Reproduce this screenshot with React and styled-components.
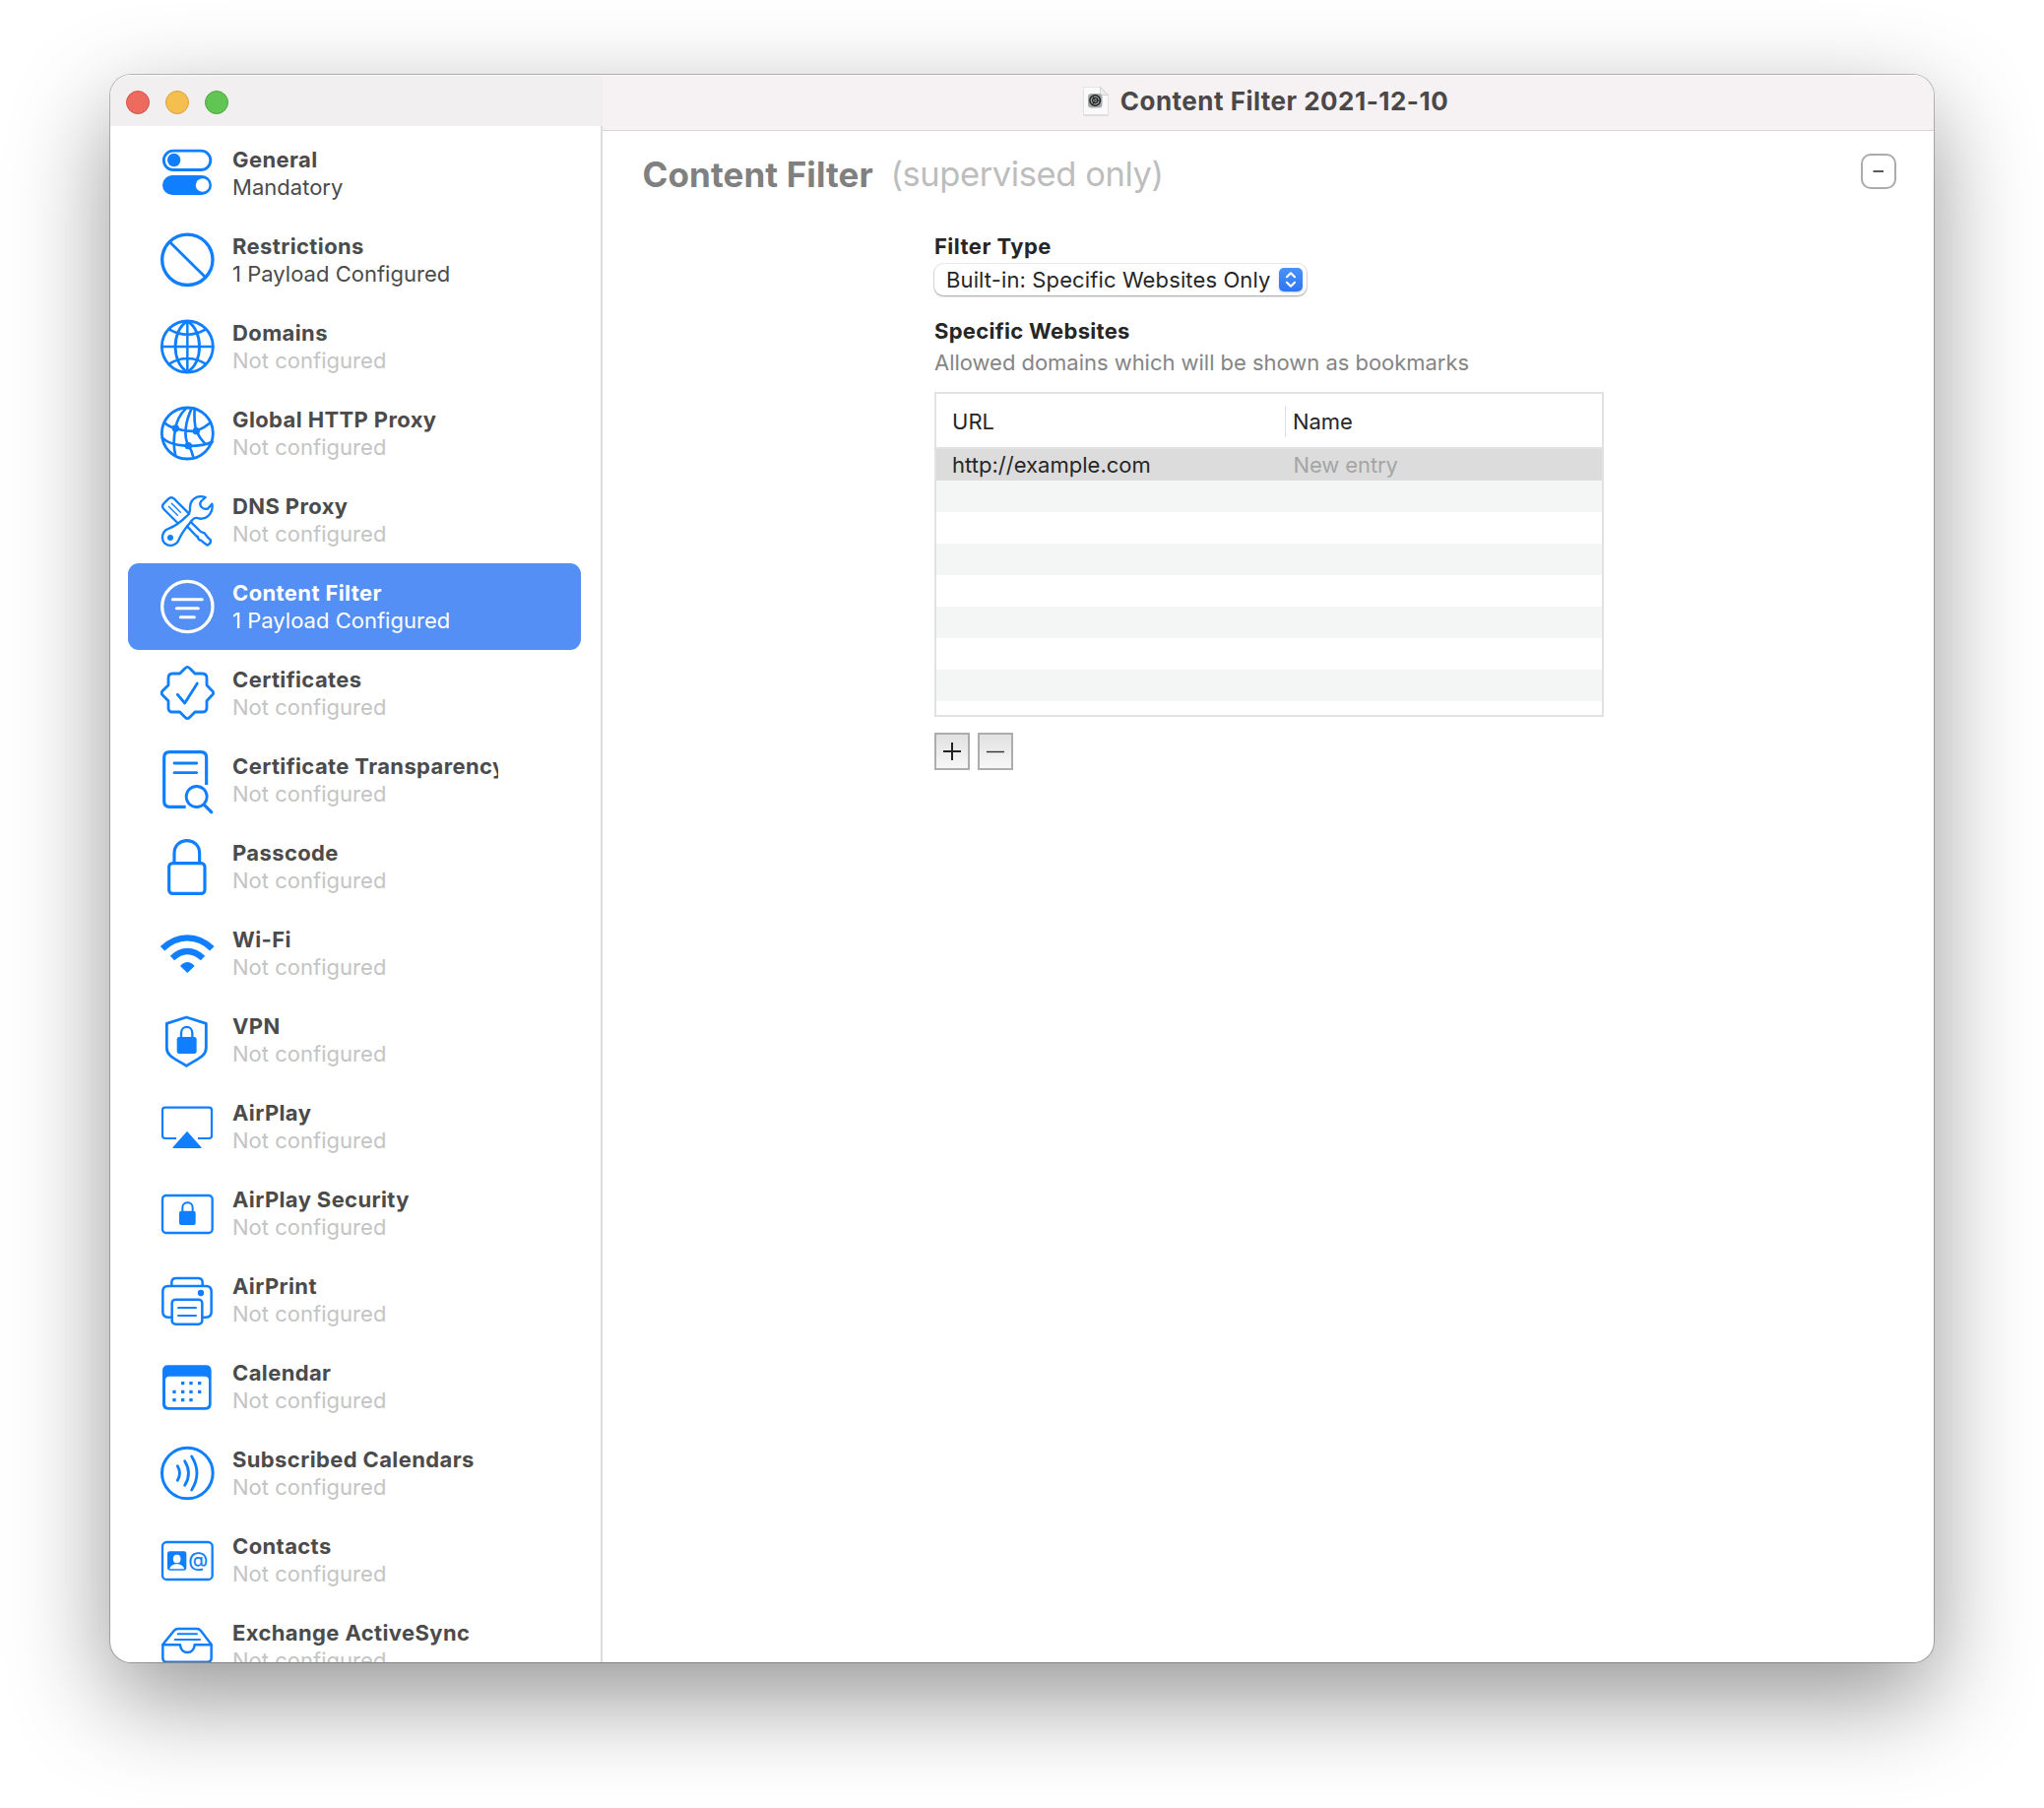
import React, { useState } from "react";
import styled, { createGlobalStyle } from "styled-components";

const BLUE = "#0f7fff";

const GlobalStyle = createGlobalStyle`
  body {
    margin: 0;
    background: #fff;
    font-family: Inter, "Liberation Sans", sans-serif;
    font-size: 22px;
    line-height: 28px;
    overflow: hidden;
  }
  * {
    box-sizing: border-box;
  }
`;

const Desktop = styled.div`
  width: 2076px;
  height: 1836px;
  padding: 76px 112px 148px;
  overflow: hidden;
`;

const Window = styled.div`
  display: flex;
  width: 1852px;
  height: 1612px;
  border-radius: 21px;
  overflow: hidden;
  background: #fff;
  box-shadow: 0 0 0 1px rgba(0, 0, 0, 0.24), 0 36px 100px rgba(0, 0, 0, 0.42);
`;

const Sidebar = styled.aside`
  display: flex;
  flex-direction: column;
  width: 500px;
  flex: none;
`;

const WindowControls = styled.div`
  display: flex;
  align-items: center;
  gap: 16px;
  height: 52px;
  flex: none;
  padding: 4px 0 0 16px;
  background: #f1eff0;
  box-shadow: inset 0 1px 0 #fafafa;
`;

const Light = styled.span`
  width: 24px;
  height: 24px;
  border-radius: 50%;
  background: ${(props) => props.color};
  border: 1px solid ${(props) => props.edge};
`;

const PayloadList = styled.ul`
  flex: 1;
  min-height: 0;
  margin: 0;
  padding: 4px 20px 0 18px;
  list-style: none;
  overflow: hidden;
  border-right: 2px solid #dcdcdc;
`;

const Payload = styled.li`
  display: flex;
  height: 88px;
  padding-left: 30px;
  border-radius: 11px;
  color: ${(props) => (props.selected ? "#fff" : BLUE)};
  background: ${(props) => (props.selected ? "#548ff5" : "transparent")};
`;

const PayloadIcon = styled.svg`
  width: 60px;
  height: 88px;
  flex: none;
  margin-right: 16px;
  fill: none;
  stroke: currentColor;
  stroke-width: 8.5;
  stroke-linecap: round;
  stroke-linejoin: round;
`;

const PayloadText = styled.div`
  width: 270px;
  padding-top: 16px;
  overflow: hidden;
  white-space: nowrap;
`;

const PayloadName = styled.div`
  font-weight: 700;
  letter-spacing: 0.38px;
  color: ${(props) => (props.selected ? "#fff" : "#4b4b4b")};
`;

const PayloadStatus = styled.div`
  letter-spacing: 0.02px;
  color: ${(props) => (props.selected ? "#fff" : props.configured ? "#4b4b4b" : "#c4c4c4")};
`;

const Main = styled.main`
  display: flex;
  flex-direction: column;
  flex: 1;
`;

const TitleBar = styled.header`
  display: flex;
  align-items: center;
  justify-content: center;
  gap: 12px;
  height: 57px;
  padding: 0 5px 3px 0;
  background: #f6f2f3;
  border-bottom: 1px solid #d8d5d6;
  box-shadow: inset 0 1px 0 #fcfafa;
`;

const Title = styled.div`
  font-size: 26px;
  line-height: 32px;
  font-weight: 700;
  letter-spacing: 0.48px;
  color: #4a4849;
`;

const Heading = styled.div`
  display: flex;
  align-items: flex-start;
  padding: 22px 38px 0 40.5px;
`;

const HeadingName = styled.h1`
  margin: 0 17.5px 0 0;
  font-size: 35px;
  line-height: 44px;
  font-weight: 700;
  letter-spacing: 0.1px;
  color: #808080;
`;

const HeadingNote = styled.span`
  flex: 1;
  font-size: 34.5px;
  line-height: 44px;
  letter-spacing: -0.42px;
  color: #bdbdbd;
`;

const CollapseButton = styled.button`
  display: flex;
  align-items: center;
  justify-content: center;
  width: 36px;
  height: 36px;
  margin-top: 1px;
  padding: 0;
  border: 2px solid #ababab;
  border-radius: 10px;
  background: #fff;
`;

const Form = styled.section`
  width: 680px;
  margin: 37px 0 0 337px;
`;

const Label = styled.div`
  font-weight: 700;
  letter-spacing: ${(props) => props.spacing};
  color: #262626;
`;

const Hint = styled.div`
  margin-top: 4px;
  letter-spacing: -0.03px;
  color: #858585;
`;

const PopUpButton = styled.button`
  display: flex;
  align-items: center;
  justify-content: space-between;
  width: 378px;
  height: 32px;
  margin: 4px 0 22px;
  padding: 0 4px 0 12px;
  border: 0;
  border-radius: 9px;
  background: #fff;
  box-shadow: 0 0 0 1px rgba(0, 0, 0, 0.08), 0 1px 2px rgba(0, 0, 0, 0.34);
  font: inherit;
  letter-spacing: 0.12px;
  color: #262626;
`;

const Arrows = styled.span`
  display: flex;
  width: 24px;
  height: 24px;
  border-radius: 5px;
  background: linear-gradient(#4a93f8, #2f74f4);
  box-shadow: 0 1px 2px rgba(47, 116, 244, 0.35);
`;

const Table = styled.div`
  height: 330px;
  margin-top: 16px;
  border: 2px solid #e2e2e2;
  overflow: hidden;
`;

const Row = styled.div`
  display: grid;
  grid-template-columns: 355px 1fr;
  align-items: center;
  height: 32px;
  color: #262626;
  background: ${(props) => (props.selected ? "#dcdcdc" : props.striped ? "#f4f5f5" : "#fff")};
`;

const HeaderRow = styled(Row)`
  height: 56px;
  padding-top: 2px;
  border-bottom: 2px solid #e2e2e2;
`;

const Cell = styled.span`
  padding-left: ${(props) => (props.first ? "16px" : "7.5px")};
  color: ${(props) => (props.placeholder ? "#a5a5a5" : "inherit")};
  letter-spacing: ${(props) => (props.first ? "0.02px" : "-0.1px")};
`;

const NameHeader = styled(Cell)`
  line-height: 32px;
  margin-left: -1px;
  padding-left: 7px;
  border-left: 1.5px solid #dedede;
`;

const Actions = styled.div`
  display: flex;
  gap: 8px;
  margin-top: 16px;
`;

const SquareButton = styled.button`
  display: flex;
  align-items: center;
  justify-content: center;
  width: 36px;
  height: 38px;
  padding: 0;
  border: 2px solid #adadad;
  background: linear-gradient(#e1e1e1, #f7f7f7);
`;

// every icon is drawn in a 180 x 264 box, three units to a pixel
const icons = {
  general: {
    top: 216,
    art: (
      <>
        <rect x="199" y="279.500" width="142.500" height="58" rx="29" />
        <circle cx="230" cy="307.500" r="20" fill="currentColor" stroke="none" />
        <rect x="195" y="354" width="150" height="60" rx="30" fill="currentColor" stroke="none" />
        <circle cx="317" cy="384" r="20.500" fill="#fff" stroke="none" />
      </>
    ),
  },
  restrictions: {
    top: 480,
    art: (
      <>
        <circle cx="271" cy="611.500" r="77" strokeWidth="10" />
        <path d="M218 558L325 664" />
      </>
    ),
  },
  domains: {
    top: 744,
    art: (
      <>
        <circle cx="271" cy="876" r="78" />
        <path d="M271 799V953M193 876H349M215 823Q271 855 327 823M215 929Q271 895 327 929" strokeWidth="7.500" />
        <path d="M271 799C222 826 222 926 271 953C320 926 320 826 271 799Z" />
      </>
    ),
  },
  globalProxy: {
    top: 48,
    art: (
      <>
        <circle cx="271" cy="180" r="78" />
        <path
          d="M267 104C246 125 238 142 235 165C228 195 229 225 235 249M284 104C265 145 258 190 275 219Q285 232 288 250M293 104C291 135 293 155 298 173Q308 195 324 211M203 149Q214 159 235 165Q265 176 298 173Q322 164 339 149M195 194C222 222 300 226 347 206"
          strokeWidth="8"
        />
        <g fill="currentColor" stroke="none">
          <circle cx="235" cy="165" r="11" />
          <circle cx="298" cy="173" r="11" />
          <circle cx="274" cy="218" r="11" />
        </g>
      </>
    ),
  },
  dns: {
    top: 312,
    art: (
      <g strokeWidth="7">
        <path d="M241 453L199 411Q191 402 199 394L213 380Q222 371 231 380L276 425" />
        <path d="M223 394L250 421M214 403L241 430" strokeWidth="4" />
        <path d="M326 375C298 366 278 384 279 407C280 421 275 428 268 433C248 453 232 463 215 470C193 477 190 503 202 515C216 528 238 521 245 504C253 482 268 466 285 445C292 435 299 436 308 440C335 442 351 418 346 395L334 409Q324 414 314 405Q306 395 313 387Z" />
        <path d="M283 452L312 480M270 463L300 495M312 480L323 484Q331 496 342 506Q343 516 332 521Q321 514 312 506Q304 505 302 494" />
        <circle cx="219" cy="498" r="9" fill="currentColor" stroke="none" />
      </g>
    ),
  },
  contentFilter: {
    top: 576,
    art: (
      <>
        <circle cx="271" cy="708" r="77" strokeWidth="10" />
        <path d="M226 686H316M238 713H304M250 740H292" strokeWidth="9" />
      </>
    ),
  },
  certificates: {
    top: 0,
    art: (
      <>
        <path d="M248 72L262 58Q271 46 280 58L294 72H316Q330 72 330 86V107L344 122Q356 131 344 140L330 155V176Q330 189 316 189H294L280 203Q271 215 262 203L248 189H226Q213 189 213 176V155L198 140Q187 131 198 122L213 107V86Q213 72 226 72Z" />
        <path d="M241 136L263 162L301 102" />
      </>
    ),
  },
  transparency: {
    top: 264,
    art: (
      <>
        <path d="M329 411V328Q329 311 312 311H217Q200 311 200 328V461Q200 478 217 478H266" strokeWidth="9.500" strokeLinecap="butt" />
        <path d="M231 345H299M231 374H299" />
        <circle cx="299" cy="447" r="31.500" />
        <path d="M323 473L344 494" strokeWidth="10" />
      </>
    ),
  },
  passcode: {
    top: 528,
    art: (
      <>
        <rect x="215" y="650" width="109" height="92" rx="11" strokeWidth="9.500" />
        <path d="M231 648V620C231 568 308 568 308 620V648" strokeWidth="9.500" />
      </>
    ),
  },
  wifi: {
    top: 12,
    art: (
      <>
        <path d="M195 130Q229 97 271 97Q313 97 346 130" strokeWidth="19" strokeLinecap="butt" />
        <path d="M225 159Q247 138 271 138Q296 138 318 159" strokeWidth="19" strokeLinecap="butt" />
        <path d="M249 183Q271 159 293 183L271 204Z" fill="currentColor" stroke="none" />
      </>
    ),
  },
  vpn: {
    top: 276,
    art: (
      <>
        <path d="M268 339L328 358V432C328 460 298 467 268 487C238 467 208 460 208 432V358Z" />
        <rect x="239" y="399" width="60" height="51" rx="7" fill="currentColor" stroke="none" />
        <path d="M252 401V388C252 362 286 362 286 388V401" strokeWidth="7" />
      </>
    ),
  },
  airplay: {
    top: 540,
    art: (
      <>
        <path d="M237 708H203Q195 708 195 700V622Q195 614 203 614H337Q345 614 345 622V700Q345 708 337 708H303" strokeWidth="6.500" strokeLinecap="butt" />
        <path d="M270 686L314 736Q315 738 312 738H228Q225 738 226 736Z" fill="currentColor" stroke="none" />
      </>
    ),
  },
  airplaySecurity: {
    top: 24,
    art: (
      <>
        <rect x="195" y="102" width="152" height="114" rx="11" strokeWidth="7" />
        <rect x="246" y="149" width="50" height="43" rx="6" fill="currentColor" stroke="none" />
        <path d="M256 151V139C256 119 287 119 287 139V151" strokeWidth="6" />
      </>
    ),
  },
  airprint: {
    top: 288,
    art: (
      <g strokeWidth="7.500">
        <path d="M223 375V367Q223 354 236 354H304Q317 354 317 367V375" strokeLinecap="butt" />
        <path d="M224 473H212Q196 473 196 457V395Q196 378 212 378H328Q344 378 344 395V457Q344 473 328 473H316" />
        <rect x="224" y="419" width="92" height="75" rx="11" />
        <path d="M243 444H297M243 468H297" strokeWidth="6" />
        <circle cx="312" cy="399" r="9.500" fill="currentColor" stroke="none" />
      </g>
    ),
  },
  calendar: {
    top: 552,
    art: (
      <>
        <path
          d="M212 619H327Q344 619 344 636V738Q344 755 327 755H212Q195 755 195 738V636Q195 619 212 619ZM216 653Q204 653 204 665V736Q204 747 216 747H324Q336 747 336 736V665Q336 653 324 653Z"
          fill="currentColor"
          fillRule="evenodd"
          stroke="none"
        />
        <path
          d="M252 669h10v10h-10zM277 669h10v10h-10zM303 669h10v10h-10zM226 695h10v10h-10zM252 695h10v10h-10zM277 695h10v10h-10zM303 695h10v10h-10zM226 720h10v10h-10zM252 720h10v10h-10zM277 720h10v10h-10z"
          fill="currentColor"
          stroke="none"
        />
      </>
    ),
  },
  subscribed: {
    top: 36,
    art: (
      <>
        <circle cx="271" cy="168" r="77.500" strokeWidth="9" />
        <path d="M241 146Q254 168 241 190M263 131Q286 168 263 205M284 117Q316 168 284 219" />
      </>
    ),
  },
  contacts: {
    top: 300,
    art: (
      <>
        <rect x="195" y="378" width="152" height="114" rx="13" strokeWidth="7" />
        <rect x="210" y="406" width="58" height="58" rx="7" fill="currentColor" stroke="none" />
        <g fill="#fff" stroke="none">
          <ellipse cx="239" cy="429" rx="11.500" ry="13" />
          <path d="M217 460C220 440 258 440 261 460Z" />
        </g>
        <text x="303.500" y="453" textAnchor="middle" fontFamily="Inter, sans-serif" fontSize="61" fontWeight="500" fill="currentColor" stroke="none">
          @
        </text>
      </>
    ),
  },
  exchange: {
    top: 564,
    art: (
      <>
        <path d="M196 690L230 648Q235 642 242 642H300Q307 642 312 648L344 690V732Q344 743 333 743H207Q196 743 196 732Z" strokeWidth="7.500" />
        <path d="M197 691H249C250 722 292 722 293 691H343" strokeWidth="7.500" />
        <path d="M242 658H300M233 675H309" strokeWidth="6" />
      </>
    ),
  },
};

const payloads = [
  { name: "General", status: "Mandatory", icon: "general", configured: true },
  { name: "Restrictions", status: "1 Payload Configured", icon: "restrictions", configured: true },
  { name: "Domains", icon: "domains" },
  { name: "Global HTTP Proxy", icon: "globalProxy" },
  { name: "DNS Proxy", icon: "dns" },
  { name: "Content Filter", status: "1 Payload Configured", icon: "contentFilter", configured: true },
  { name: "Certificates", icon: "certificates" },
  { name: "Certificate Transparency", icon: "transparency" },
  { name: "Passcode", icon: "passcode" },
  { name: "Wi-Fi", icon: "wifi" },
  { name: "VPN", icon: "vpn" },
  { name: "AirPlay", icon: "airplay" },
  { name: "AirPlay Security", icon: "airplaySecurity" },
  { name: "AirPrint", icon: "airprint" },
  { name: "Calendar", icon: "calendar" },
  { name: "Subscribed Calendars", icon: "subscribed" },
  { name: "Contacts", icon: "contacts" },
  { name: "Exchange ActiveSync", icon: "exchange" },
];

const DocumentIcon = () => (
  <svg width="26" height="30" viewBox="0 0 26 30">
    <path d="M.5 3H17l8.500 7.500V29.500H.5z" fill="#cbc8c9" />
    <path d="M.5 .5H17.500L25.500 8.500V28.500H.5z" fill="#fafafa" stroke="#dedcdd" strokeWidth=".7" />
    <path d="M17.500 .5V8.500H25.500z" fill="#ececec" stroke="#c9c7c8" strokeWidth=".7" />
    <rect x="5" y="7" width="14.500" height="14.500" rx="3.500" fill="#a4a9a9" />
    <circle cx="12.200" cy="14" r="5.300" fill="#9da3a3" stroke="#222" strokeWidth="1.500" />
    <circle cx="12.200" cy="14" r="2.600" fill="none" stroke="#222" strokeWidth="1.100" />
    <path d="M12.200 14H17M12.200 14L9.900 10M12.200 14L9.900 18" stroke="#222" strokeWidth=".9" />
  </svg>
);

export default function App() {
  const [selected, setSelected] = useState("Content Filter");

  return (
    <>
      <GlobalStyle />
      <Desktop>
        <Window>
          <Sidebar>
            <WindowControls>
              <Light color="#ec6a5e" edge="#d35549" />
              <Light color="#f4bf4f" edge="#d9a13c" />
              <Light color="#61c554" edge="#4da73f" />
            </WindowControls>
            <PayloadList>
              {payloads.map(({ name, status, icon, configured }) => (
                <Payload key={name} selected={name === selected} onClick={() => setSelected(name)}>
                  <PayloadIcon viewBox={`180 ${icons[icon].top} 180 264`}>{icons[icon].art}</PayloadIcon>
                  <PayloadText>
                    <PayloadName selected={name === selected}>{name}</PayloadName>
                    <PayloadStatus selected={name === selected} configured={configured}>
                      {status || "Not configured"}
                    </PayloadStatus>
                  </PayloadText>
                </Payload>
              ))}
            </PayloadList>
          </Sidebar>
          <Main>
            <TitleBar>
              <DocumentIcon />
              <Title>Content Filter 2021-12-10</Title>
            </TitleBar>
            <Heading>
              <HeadingName>Content Filter</HeadingName>
              <HeadingNote>(supervised only)</HeadingNote>
              <CollapseButton>
                <svg width="12" height="4" viewBox="0 0 12 4">
                  <path d="M.5 2H11" stroke="#222" strokeWidth="1.400" />
                </svg>
              </CollapseButton>
            </Heading>
            <Form>
              <Label spacing="0.46px">Filter Type</Label>
              <PopUpButton>
                Built-in: Specific Websites Only
                <Arrows>
                  <svg width="24" height="24" viewBox="0 0 24 24" fill="none" stroke="#fff" strokeWidth="2.200" strokeLinecap="round" strokeLinejoin="round">
                    <path d="M8 9.200L12 5.300L16 9.200M8 14.800L12 18.700L16 14.800" />
                  </svg>
                </Arrows>
              </PopUpButton>
              <Label spacing="0.3px">Specific Websites</Label>
              <Hint>Allowed domains which will be shown as bookmarks</Hint>
              <Table>
                <HeaderRow>
                  <Cell first>URL</Cell>
                  <NameHeader>Name</NameHeader>
                </HeaderRow>
                <Row selected>
                  <Cell first>http://example.com</Cell>
                  <Cell placeholder="true">New entry</Cell>
                </Row>
                {[...Array(8)].map((_, i) => (
                  <Row key={i} striped={i % 2 === 0} />
                ))}
              </Table>
              <Actions>
                <SquareButton>
                  <svg width="18" height="18" viewBox="0 0 18 18">
                    <path d="M0 9H18M9 0V18" stroke="#222" strokeWidth="2" />
                  </svg>
                </SquareButton>
                <SquareButton>
                  <svg width="18" height="18" viewBox="0 0 18 18">
                    <path d="M0 9.500H18" stroke="#333" strokeWidth="1.400" />
                  </svg>
                </SquareButton>
              </Actions>
            </Form>
          </Main>
        </Window>
      </Desktop>
    </>
  );
}
